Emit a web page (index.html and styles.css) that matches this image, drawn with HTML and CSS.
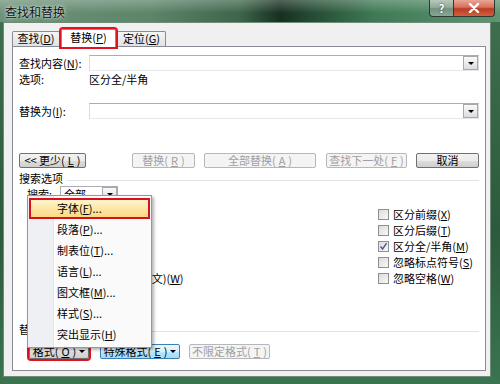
FILE: index.html
```html
<!DOCTYPE html>
<html lang="zh-CN">
<head>
<meta charset="UTF-8">
<meta name="viewport" content="width=device-width, initial-scale=1.0">
<title>查找和替换</title>
<link rel="stylesheet" href="styles.css">
</head>
<body>
<div class="window">
    <div class="titlebar">
        <span class="title">查找和替换</span>
        <div class="caption">
            <span class="cap-help">?</span>
            <span class="cap-close">
                <svg width="12" height="10" viewBox="0 0 12 10"><path d="M2 1 L10 9 M10 1 L2 9" stroke="#fff" stroke-width="2.4" stroke-linecap="round"/></svg>
            </span>
        </div>
    </div>

    <div class="client">
        <div class="tabs">
            <div class="tab">查找(<u>D</u>)</div>
            <div class="tab active">替换(<u>P</u>)</div>
            <div class="tab">定位(<u>G</u>)</div>
        </div>

        <div class="panel">
            <div class="field find">
                <span class="label">查找内容(<u>N</u>):</span>
                <div class="combo"><span class="drop"><i class="tri"></i></span></div>
            </div>
            <div class="info">
                <span class="label">选项:</span>
                <span>区分全/半角</span>
            </div>
            <div class="field replace">
                <span class="label">替换为(<u>I</u>):</span>
                <div class="combo"><span class="drop"><i class="tri"></i></span></div>
            </div>

            <div class="actions">
                <button class="btn less">&lt;&lt; 更少(<u>L</u>)</button>
                <button class="btn off w-replace">替换(<u>R</u>)</button>
                <button class="btn off w-all">全部替换(<u>A</u>)</button>
                <button class="btn off w-next">查找下一处(<u>F</u>)</button>
                <button class="btn w-cancel">取消</button>
            </div>

            <div class="group search-group"><span>搜索选项</span><span class="rule"></span></div>

            <div class="search">
                <span class="search-label">搜索:</span>
                <div class="select">全部<span class="drop"><i class="tri"></i></span></div>
            </div>

            <div class="options">
                <div class="col left-col">
                    <div class="check"><span class="box"></span>区分大小写(<u>H</u>)</div>
                    <div class="check"><span class="box"></span>全字匹配(<u>Y</u>)</div>
                    <div class="check"><span class="box"></span>使用通配符(<u>U</u>)</div>
                    <div class="check"><span class="box"></span>同音(英文)(<u>K</u>)</div>
                    <div class="check"><span class="box"></span>查找单词的所有形式(英文)(<u>W</u>)</div>
                </div>
                <div class="col right-col">
                    <div class="check"><span class="box"></span>区分前缀(<u>X</u>)</div>
                    <div class="check"><span class="box"></span>区分后缀(<u>T</u>)</div>
                    <div class="check"><span class="box checked"><svg width="9" height="9" viewBox="0 0 9 9"><path d="M1.5 4.5 L3.6 7 L7.6 1.2" fill="none" stroke="#4b5b94" stroke-width="1.4"/></svg></span>区分全/半角(<u>M</u>)</div>
                    <div class="check"><span class="box"></span>忽略标点符号(<u>S</u>)</div>
                    <div class="check"><span class="box"></span>忽略空格(<u>W</u>)</div>
                </div>
            </div>

            <div class="group replace-group"><span>替换</span><span class="rule"></span></div>

            <div class="format-row">
                <button class="btn marked w-format">格式(<u>O</u>) <i class="tri"></i></button>
                <button class="btn hot w-special">特殊格式(<u>E</u>)<i class="tri"></i></button>
                <button class="btn off w-noformat">不限定格式(<u>T</u>)</button>
            </div>
        </div>
    </div>

    <!-- 格式 按钮弹出的菜单 -->
    <div class="menu">
        <div class="item hot">字体(<u>F</u>)...</div>
        <div class="item">段落(<u>P</u>)...</div>
        <div class="item">制表位(<u>T</u>)...</div>
        <div class="item">语言(<u>L</u>)...</div>
        <div class="item">图文框(<u>M</u>)...</div>
        <div class="item">样式(<u>S</u>)...</div>
        <div class="item">突出显示(<u>H</u>)</div>
    </div>
</div>
</body>
</html>
```

FILE: styles.css
```css
body {
    margin: 0;
    width: 500px;
    height: 384px;
    overflow: hidden;
    font-family: "Noto Sans CJK SC", "Noto Sans", sans-serif;
    font-size: 11px;
    color: #000;
    background: linear-gradient(180deg, #3f7050 0%, #2c5a3c 60%, #3a7450 100%);
}

u {
    text-decoration: underline;
}

.window {
    position: relative;
    height: 384px;
    display: flex;
    flex-direction: column;
}

/* 标题栏 */
.titlebar {
    flex: none;
    height: 22px;
    display: flex;
    justify-content: space-between;
    align-items: flex-start;
    background:
        linear-gradient(180deg, rgba(255,255,255,.25) 0%, rgba(255,255,255,0) 60%),
        linear-gradient(90deg, #6f927a 0%, #5c8569 30%, #3d654b 48%, #173020 56%, #244a32 62%, #3f7a55 75%, #5f9672 100%);
}

.title {
    padding: 5px 0 0 5px;
    font-size: 12px;
    line-height: 14px;
    color: #111;
    text-shadow: 0 0 5px rgba(230,240,230,.9), 0 0 2px rgba(230,240,230,.9);
}

.caption {
    display: flex;
    margin-right: 5px;
}

.cap-help,
.cap-close {
    box-sizing: border-box;
    height: 17px;
    border: 1px solid #2d3a32;
    border-top: none;
    display: flex;
    align-items: center;
    justify-content: center;
}

.cap-help {
    width: 24px;
    border-radius: 0 0 0 4px;
    border-right: none;
    background: linear-gradient(180deg, #b8c8bc 0%, #93ab9b 45%, #73917f 55%, #8aa696 100%);
    color: #fff;
    font-weight: bold;
    font-size: 11px;
    text-shadow: 0 0 2px #334;
}

.cap-close {
    width: 42px;
    border-radius: 0 0 4px 0;
    background: linear-gradient(180deg, #e9a796 0%, #d6705c 45%, #bd3a22 55%, #d0603f 100%);
}

/* 客户区 */
.client {
    flex: 1;
    margin: 0 9px 7px 3px;
    padding: 6px 4px 5px 8px;
    background: #f0f0f0;
    border: 1px solid #6e8c78;
    display: flex;
    flex-direction: column;
}

.tabs {
    height: 17px;
    display: flex;
    align-items: flex-end;
}

.tab {
    box-sizing: border-box;
    height: 15px;
    padding: 0 2px;
    border: 1px solid #898c95;
    border-bottom: none;
    border-radius: 2px 2px 0 0;
    background: linear-gradient(180deg, #f5f5f5, #e2e2e2);
    line-height: 13px;
    text-align: center;
}

.tab:nth-child(1) {
    width: 48px;
}

.tab:nth-child(3) {
    width: 49px;
    margin-left: 1px;
}

.tab.active {
    position: relative;
    z-index: 1;
    width: 55px;
    height: 18px;
    margin-left: 1px;
    margin-bottom: -1px;
    background: #fff;
    line-height: 15px;
    outline: 2px solid #e0141e;
}

.panel {
    flex: 1;
    background: #fff;
    border: 1px solid #898c95;
    padding: 8px 6px 0 6px;
    display: flex;
    flex-direction: column;
}

.label {
    flex: none;
    width: 70px;
}

.field {
    height: 16px;
    display: flex;
    align-items: center;
}

.field.replace {
    margin-top: 17px;
}

.combo {
    flex: 1;
    box-sizing: border-box;
    height: 16px;
    border: 1px solid #abadb3;
    border-left-color: #dadce2;
    border-right-color: #dadce2;
    border-bottom-color: #e3e9ef;
    display: flex;
    justify-content: flex-end;
    align-items: center;
}

.drop {
    box-sizing: border-box;
    width: 15px;
    height: 14px;
    border: 1px solid #a8a8a8;
    background: linear-gradient(180deg, #fafafa, #dcdcdc);
    display: flex;
    align-items: center;
    justify-content: center;
}

.tri {
    display: inline-block;
    width: 0;
    height: 0;
    border-left: 3px solid transparent;
    border-right: 3px solid transparent;
    border-top: 3px solid #000;
}

.info {
    margin-top: 1px;
    height: 14px;
    line-height: 14px;
    display: flex;
}

/* 按钮 */
.btn {
    box-sizing: border-box;
    height: 15px;
    padding: 0;
    font: inherit;
    font-size: 11px;
    line-height: 13px;
    color: #000;
    border: 1px solid #707070;
    border-radius: 2px;
    background: linear-gradient(180deg, #f2f2f2 0%, #ebebeb 50%, #dddddd 51%, #cfcfcf 100%);
    display: flex;
    align-items: center;
    justify-content: center;
    gap: 3px;
}

.btn.off {
    border-color: #b4b8bb;
    background: #f4f4f4;
    color: #a0a0a0;
}

.btn.hot {
    border-color: #3c7fb1;
    background: linear-gradient(180deg, #eaf6fd 0%, #d9f0fc 50%, #bee6fd 51%, #a7d9f5 100%);
}

.btn.marked {
    outline: 2px solid #e0101c;
}

.actions {
    margin-top: 34px;
    display: flex;
    gap: 9px;
}

.less {
    width: 67px;
    margin-right: 37px;
}

.w-replace { width: 63px; }
.w-all { width: 112px; margin-right: 1px; }
.w-next { width: 81px; }
.w-cancel { width: 63px; }

.group {
    height: 14px;
    line-height: 14px;
    display: flex;
    align-items: center;
    gap: 4px;
}

.search-group {
    margin-top: 3px;
}

.replace-group {
    margin-top: 36px;
}

.rule {
    flex: 1;
    height: 0;
    border-top: 1px solid #dfe3e8;
    margin-top: 4px;
}

.search {
    margin-top: 1px;
    height: 16px;
    padding-left: 8px;
    display: flex;
    align-items: center;
}

.search-label {
    width: 33px;
}

.select {
    box-sizing: border-box;
    width: 58px;
    height: 16px;
    padding-left: 3px;
    border: 1px solid #abadb3;
    line-height: 14px;
    display: flex;
    justify-content: space-between;
}

.options {
    margin-top: 4px;
    display: flex;
    justify-content: space-between;
}

.left-col {
    padding-left: 8px;
}

.left-col .box {
    margin-right: 0;
}

.right-col {
    width: 101px;
}

.check {
    height: 16px;
    line-height: 16px;
    display: flex;
    align-items: center;
    white-space: nowrap;
}

.box {
    box-sizing: border-box;
    width: 11px;
    height: 11px;
    margin-right: 4px;
    border: 1px solid #8e8f8f;
    background: linear-gradient(135deg, #dcdcdc, #f8f8f8);
    display: flex;
    align-items: center;
    justify-content: center;
}

.format-row {
    margin-top: 8px;
    padding-left: 10px;
    display: flex;
    gap: 11px;
}

.w-format { width: 60px; }
.w-special { width: 80px; margin-right: -2px; }
.w-noformat { width: 81px; }

/* 弹出菜单 */
.menu {
    position: absolute;
    left: 27px;
    top: 195px;
    width: 125px;
    box-sizing: border-box;
    padding: 2px 1px;
    border: 1px solid #979797;
    background: linear-gradient(90deg, #eef0f3 0, #eef0f3 25px, #e2e3e3 25px, #e2e3e3 26px, #fff 26px, #fff 27px, #fafafa 27px);
    box-shadow: 2px 2px 3px rgba(0,0,0,.3);
}

.item {
    box-sizing: border-box;
    height: 21px;
    line-height: 21px;
    padding-left: 28px;
    white-space: nowrap;
}

.item.hot {
    line-height: 17px;
    border: 2px solid #d6131d;
    padding-left: 26px;
    background: linear-gradient(180deg, #fff4cf 0%, #fde7a6 50%, #fbd983 100%);
}
```
